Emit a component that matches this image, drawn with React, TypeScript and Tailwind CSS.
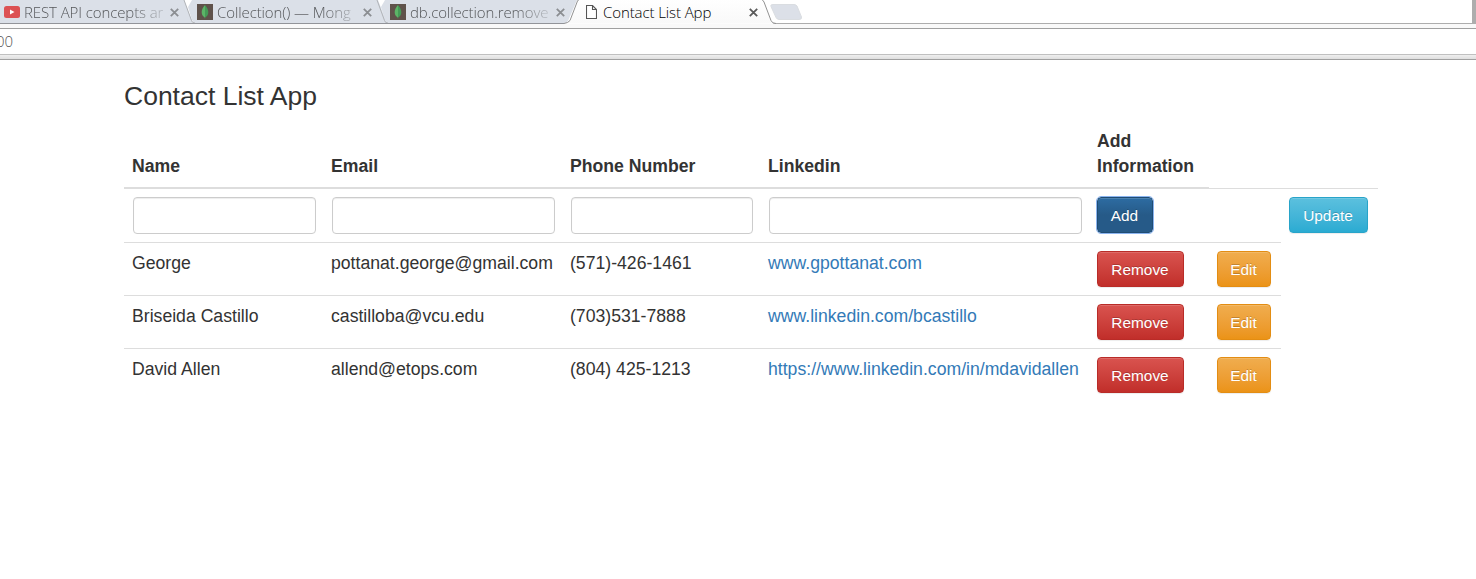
import React from "react";
import clsx from "clsx";

const contacts = [
  { name: "George", email: "pottanat.george@gmail.com", phone: "(571)-426-1461", link: "www.gpottanat.com" },
  { name: "Briseida Castillo", email: "castilloba@vcu.edu", phone: "(703)531-7888", link: "www.linkedin.com/bcastillo" },
  { name: "David Allen", email: "allend@etops.com", phone: "(804) 425-1213", link: "https://www.linkedin.com/in/mdavidallen" },
];

const tones = {
  primary: "border-[#204d74] bg-linear-to-b from-[#2d6ca2] to-[#265a88] to-50% outline-1 outline-[#8ab4f0]",
  info: "border-[#28a4c9] bg-linear-to-b from-[#5bc0de] to-[#2aabd2]",
  danger: "border-[#b92c28] bg-linear-to-b from-[#d9534f] to-[#c12e2a]",
  warning: "border-[#e38d13] bg-linear-to-b from-[#f0ad4e] to-[#eb9316]",
};

function Button({ tone, className, children }: { tone: keyof typeof tones; className?: string; children: React.ReactNode }) {
  return (
    <button
      className={clsx(
        "block h-9 rounded-[4px] border pt-px pr-px text-center text-[15.4px] leading-[33px] text-white shadow-[inset_0_1px_0_rgba(255,255,255,.15),0_1px_1px_rgba(0,0,0,.075)] [text-shadow:0_-1px_0_rgba(0,0,0,.2)]",
        tones[tone],
        className,
      )}
    >
      {children}
    </button>
  );
}

function Close({ dark }: { dark?: boolean }) {
  return (
    <svg className="mt-[8px] h-[9px] w-[9px] shrink-0" viewBox="0 0 9 9" fill="none" stroke={dark ? "#5a5a5a" : "#8b8e92"} strokeWidth="1.8">
      <path d="M.8.8l7.400 7.400M8.200.8L.8 8.200" />
    </svg>
  );
}

function Leaf() {
  return (
    <svg className="mt-[4px] h-4 w-4 shrink-0" viewBox="0 0 16 16">
      <path fill="#5f524b" d="M0 0h16v16H0z" />
      <path fill="#5cb567" d="M8 1C5.600 4 4.700 5.800 4.700 8.300 4.700 10.800 6 12.500 7.700 13.500L8 15z" />
      <path fill="#459b57" d="M8 1c2.400 3 3.300 4.800 3.300 7.300 0 2.500-1.300 4.200-3 5.200L8 15z" />
    </svg>
  );
}

function Tube() {
  return (
    <svg className="mt-[6px] h-3 w-4 shrink-0" viewBox="0 0 16 12">
      <rect width="16" height="12" rx="2.500" fill="#dc5153" />
      <path fill="#fff" d="M6 3.500v5L10.500 6z" />
    </svg>
  );
}

function Page() {
  return (
    <svg className="mt-[5px] h-[14px] w-[11px] shrink-0" viewBox="0 0 11 14" fill="#fff" stroke="#555" strokeWidth="1.1">
      <path d="M.5.5h6l4 4v9H.5zM6.500.5v4h4" />
    </svg>
  );
}

function TabLabel({ children, className }: { children: React.ReactNode; className?: string }) {
  return <span className={clsx("whitespace-nowrap leading-6", className)}>{children}</span>;
}

const fade = "text-[#55575a] [mask-image:linear-gradient(to_right,#000_calc(100%-32px),rgba(0,0,0,.25))]";

function Browser() {
  return (
    <header className="font-['Open_Sans',sans-serif] text-[15px] font-light">
      <div className="relative h-6">
        <svg className="absolute inset-0 h-6 w-[1476px]" viewBox="0 0 1476 24" fill="none">
          <defs>
            <linearGradient id="active" x1="0" y1="0" x2="0" y2="1">
              <stop stopColor="#fff" />
              <stop offset="1" stopColor="#f9f9f9" />
            </linearGradient>
          </defs>
          <path fill="#dbe0e8" d="M0 0H184L193 23.500H0z" />
          <path fill="#dbe0e8" d="M192 0H378L387 23.500H196Q193 23 192 20L188 7z" />
          <path fill="#dbe0e8" d="M385 0H577L568 21Q567 23 564 23.500H389Q386 23 385 20L381 7z" />
          <path stroke="#b0b3b7" d="M184 0L191.500 20.500Q192 23 195 23M377 0L384.500 20.500Q385 23 388 23" />
          <path stroke="#929499" d="M0 23.500H564" />
          <path stroke="#adadad" d="M773 23.500H1476" />
          <path fill="url(#active)" stroke="#929292" d="M564 23.500Q568 23 570 20.500L577.500 1Q578 0 580 -1H761Q763 0 764 2L771 20.500Q772 23.500 776 23.500" />
          <path fill="#dce0e8" stroke="#dadde1" d="M773 4.500H794Q796 4.500 797 6L801.500 17Q802 19.500 799 19.500H779Q777 19.500 776 17.500L771 6.500Q770 4.500 773 4.500z" />
          <path fill="#adadad" d="M1472 0h4v23h-4z" />
        </svg>
        <div className="relative flex h-6 items-start">
          <div className="flex w-[193px] pl-1">
            <Tube />
            <TabLabel className={clsx("ml-[4px] w-[139px] tracking-[-0.1px]", fade)}>REST API concepts ar</TabLabel>
            <span className="w-[7px]" />
            <Close />
          </div>
          <div className="flex w-[193px] pl-1">
            <Leaf />
            <TabLabel className={clsx("ml-[4px] w-[138px] tracking-[-0.1px]", fade)}>Collection() — Mong</TabLabel>
            <span className="w-[8px]" />
            <Close />
          </div>
          <div className="flex w-[193px] pl-1">
            <Leaf />
            <TabLabel className={clsx("ml-[4px] w-[138px] tracking-[-0.1px]", fade)}>db.collection.remove</TabLabel>
            <span className="w-[8px]" />
            <Close />
          </div>
          <div className="flex w-[190px] pl-[7px]">
            <Page />
            <TabLabel className="ml-[6px] w-[146px] tracking-[-0.1px] text-black">Contact List App</TabLabel>
            <Close dark />
          </div>
        </div>
      </div>
      <div className="h-[5px] border-b border-[#a0a0a0] bg-[#f9f9f9]" />
      <div className="flex h-[26px] items-center border-b border-[#c0c0c0] bg-white text-[#555]">
        <span className="-ml-[4px]">00</span>
      </div>
      <div className="h-[5px] border-b border-[#a0a0a0] bg-linear-to-b from-[#efefef] to-[#dfdfdf]" />
    </header>
  );
}

function Field() {
  return <input className="mx-px block h-[37px] w-full rounded-[4px] border border-[#ccc] shadow-[inset_0_1px_1px_rgba(0,0,0,.075)]" />;
}

export default function App() {
  return (
    <div className="h-[579px] w-[1476px] overflow-hidden bg-white font-['Liberation_Sans',Arial,sans-serif] text-[#333]">
      <Browser />
      <main className="ml-[124px] w-[1254px] pt-[22px] text-[17.65px] leading-[25px]">
        <h1 className="h-[40px] text-[26.5px] leading-[29px]">Contact List App</h1>
        <table className="w-full table-fixed border-separate border-spacing-0 [&_td]:p-0 [&_td]:pl-2 [&_th]:p-0 [&_th]:pl-2">
          <colgroup>
            <col className="w-[199px]" />
            <col className="w-[239px]" />
            <col className="w-[198px]" />
            <col className="w-[329px]" />
            <col className="w-[120px]" />
            <col className="w-[72px]" />
            <col className="w-[97px]" />
          </colgroup>
          <thead>
            <tr className="h-[67px] text-left align-bottom [&>th]:border-b-2 [&>th]:border-[#ddd] [&>th]:pb-[8px]">
              <th>Name</th>
              <th>Email</th>
              <th>Phone Number</th>
              <th>Linkedin</th>
              <th>Add Information</th>
              <td className="border-b border-[#ddd]" />
              <td className="border-b border-[#ddd]" />
            </tr>
          </thead>
          <tbody>
            <tr className="h-[53px] align-top [&>td]:pt-2">
              <td><div className="w-[183px]"><Field /></div></td>
              <td><div className="w-[223px]"><Field /></div></td>
              <td><div className="w-[182px]"><Field /></div></td>
              <td><div className="w-[313px]"><Field /></div></td>
              <td><Button tone="primary" className="w-14">Add</Button></td>
              <td />
              <td><Button tone="info" className="w-[79px]">Update</Button></td>
            </tr>
            {contacts.map((c) => (
              <tr key={c.name} className="h-[53px] align-top [&>td]:border-t [&>td]:border-[#ddd] [&>td]:pt-2">
                <td>{c.name}</td>
                <td>{c.email}</td>
                <td>{c.phone}</td>
                <td><a className="text-[#337ab7]">{c.link}</a></td>
                <td><Button tone="danger" className="w-[87px]">Remove</Button></td>
                <td><Button tone="warning" className="w-[54px]">Edit</Button></td>
              </tr>
            ))}
          </tbody>
        </table>
      </main>
    </div>
  );
}
